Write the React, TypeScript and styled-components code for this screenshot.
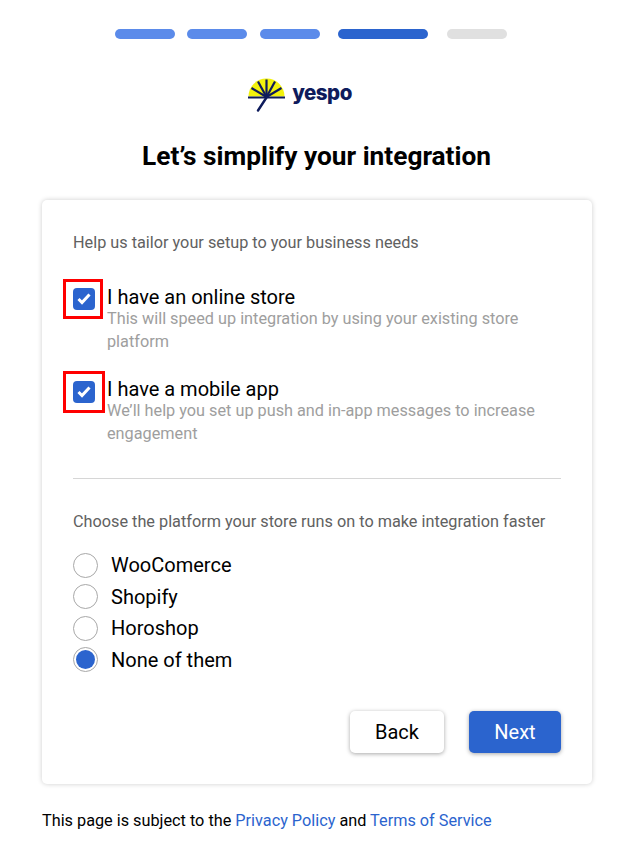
import React from "react";
import styled, { createGlobalStyle } from "styled-components";

const Color = {
  BLUE: "#2b64ce",
  LIGHT_BLUE: "#5b8bea",
  NAVY: "#0e1b5c",
  YELLOW: "#f2f20d",
};

const GlobalStyle = createGlobalStyle`
  html, body {
    margin: 0;
    padding: 0;
    background: #fff;
    font-family: Roboto, "Liberation Sans", sans-serif;
    color: #000;
  }
`;

const Page = styled.div`
  width: 634px;
  height: 846px;
  box-sizing: border-box;
  padding: 29px 42px 0;
  display: flex;
  flex-direction: column;
  overflow: hidden;
`;

const Progress = styled.div`
  display: flex;
  justify-content: center;
  height: 10px;
  margin-left: -12px;
`;

const Step = styled.div<{ $w: number; $bg: string; $after: number }>`
  width: ${(p) => p.$w}px;
  height: 10px;
  border-radius: 5px;
  background: ${(p) => p.$bg};
  margin-right: ${(p) => p.$after}px;
`;

const Logo = styled.div`
  margin-top: 39px;
  height: 34px;
  display: flex;
  align-items: flex-start;
  justify-content: center;
  gap: 7px;
  margin-left: -34px;
`;

const LogoText = styled.span`
  font-family: Inter, sans-serif;
  font-weight: 800;
  font-size: 20.5px;
  line-height: 24px;
  letter-spacing: -0.5px;
  color: ${Color.NAVY};
  margin-top: 3px;
`;

const Title = styled.h1`
  margin: 28px 0 0 -1px;
  font-size: 26.25px;
  line-height: 32px;
  font-weight: 700;
  text-align: center;
`;

const Card = styled.div`
  margin-top: 28px;
  width: 550px;
  height: 584px;
  box-sizing: border-box;
  padding: 31px 31px 0;
  background: #fff;
  border-radius: 5px;
  box-shadow: 0 0 5px rgba(0, 0, 0, 0.2);
  display: flex;
  flex-direction: column;
`;

const Hint = styled.p`
  margin: 0;
  font-size: 16.25px;
  line-height: 23px;
  color: #616161;
`;

const CheckList = styled.div`
  margin-top: 32px;
  display: flex;
  flex-direction: column;
  gap: 25px;
`;

const CheckRow = styled.div`
  display: flex;
  align-items: flex-start;
  gap: 12px;
`;

const CheckBox = styled.div<{ $top: number }>`
  position: relative;
  flex: none;
  width: 22px;
  height: 22px;
  margin-top: ${(p) => p.$top}px;
  border-radius: 4px;
  background: ${Color.BLUE};
  display: flex;
  align-items: center;
  justify-content: center;
`;

const Highlight = styled.div<{ $size: number; $top: number }>`
  position: absolute;
  left: -10px;
  top: ${(p) => p.$top}px;
  width: ${(p) => p.$size}px;
  height: ${(p) => p.$size}px;
  box-sizing: border-box;
  border: 3px solid #f00;
`;

const OptionText = styled.div`
  display: flex;
  flex-direction: column;
`;

const OptionTitle = styled.div`
  font-size: 20px;
  line-height: 22px;
`;

const OptionNote = styled.div`
  font-size: 16.25px;
  line-height: 22.5px;
  color: #9e9e9e;
`;

const Divider = styled.hr`
  margin: 33px 0 0;
  border: none;
  border-top: 1px solid #d6d6d6;
`;

const PlatformHint = styled(Hint)`
  margin-top: 31px;
`;

const RadioList = styled.div`
  margin-top: 20px;
  display: flex;
  flex-direction: column;
  gap: 7.6px;
`;

const RadioRow = styled.div`
  display: flex;
  align-items: center;
  gap: 13px;
  height: 24px;
`;

const Radio = styled.div<{ $on?: boolean }>`
  flex: none;
  width: 25px;
  height: 25px;
  box-sizing: border-box;
  border-radius: 50%;
  border: 1px solid #a8a8a8;
  display: flex;
  align-items: center;
  justify-content: center;

  &::after {
    content: "";
    display: ${(p) => (p.$on ? "block" : "none")};
    width: 19px;
    height: 19px;
    border-radius: 50%;
    background: ${Color.BLUE};
  }
`;

const RadioLabel = styled.span`
  font-size: 20px;
  line-height: 24px;
`;

const Actions = styled.div`
  margin-top: 39px;
  display: flex;
  justify-content: flex-end;
  gap: 25px;
`;

const Button = styled.button<{ $primary?: boolean }>`
  height: 42px;
  width: ${(p) => (p.$primary ? 92 : 94)}px;
  padding: 0;
  border: none;
  border-radius: 5px;
  font-family: inherit;
  font-size: 20px;
  background: ${(p) => (p.$primary ? Color.BLUE : "#fff")};
  color: ${(p) => (p.$primary ? "#fff" : "#000")};
  box-shadow: 0 1px 4px rgba(0, 0, 0, 0.35);
`;

const Footer = styled.p`
  margin: 27px 0 0;
  font-size: 16.25px;
  line-height: 20px;
`;

const FooterLink = styled.a`
  color: ${Color.BLUE};
  text-decoration: none;
`;

const YespoMark = () => (
  <svg width="37" height="34" viewBox="0 0 37 34">
    <path d="M0.5 18.5 A18 18 0 0 1 36.5 18.5 Z" fill={Color.YELLOW} />
    <g stroke={Color.NAVY} strokeWidth="2.2" fill="none">
      <path d="M0 19.5 H37" />
      <path d="M18.5 19 V1.5" />
      <path d="M18.5 19 L10 3.5" />
      <path d="M18.5 19 L27 3.5" />
      <path d="M18.5 19 L3.5 10" />
      <path d="M18.5 19 L33.5 10" />
      <path d="M18.5 19.5 L10 32.5" strokeWidth="2.4" strokeLinecap="round" />
    </g>
  </svg>
);

const CheckMark = () => (
  <svg width="14" height="12" viewBox="0 0 14 12">
    <path d="M1.5 6 L5 9.5 L12.5 1.5" stroke="#fff" strokeWidth="3" fill="none" />
  </svg>
);

const steps = [
  { w: 60, bg: Color.LIGHT_BLUE, after: 12 },
  { w: 60, bg: Color.LIGHT_BLUE, after: 13 },
  { w: 60, bg: Color.LIGHT_BLUE, after: 18 },
  { w: 90, bg: Color.BLUE, after: 19 },
  { w: 60, bg: "#e0e0e0", after: 0 },
];

const options = [
  {
    title: "I have an online store",
    note: "This will speed up integration by using your existing store platform",
    top: 2,
    boxSize: 40,
    boxTop: -9,
  },
  {
    title: "I have a mobile app",
    note: "We’ll help you set up push and in-app messages to increase engagement",
    top: 3,
    boxSize: 42,
    boxTop: -10,
  },
];

const platforms = ["WooComerce", "Shopify", "Horoshop", "None of them"];

const App: React.FC = () => {
  return (
    <Page>
      <GlobalStyle />
      <Progress>
        {steps.map((s, i) => (
          <Step key={i} $w={s.w} $bg={s.bg} $after={s.after} />
        ))}
      </Progress>
      <Logo>
        <YespoMark />
        <LogoText>yespo</LogoText>
      </Logo>
      <Title>Let’s simplify your integration</Title>
      <Card>
        <Hint>Help us tailor your setup to your business needs</Hint>
        <CheckList>
          {options.map((o) => (
            <CheckRow key={o.title}>
              <CheckBox $top={o.top}>
                <CheckMark />
                <Highlight $size={o.boxSize} $top={o.boxTop} />
              </CheckBox>
              <OptionText>
                <OptionTitle>{o.title}</OptionTitle>
                <OptionNote>{o.note}</OptionNote>
              </OptionText>
            </CheckRow>
          ))}
        </CheckList>
        <Divider />
        <PlatformHint>Choose the platform your store runs on to make integration faster</PlatformHint>
        <RadioList>
          {platforms.map((p, i) => (
            <RadioRow key={p}>
              <Radio $on={i === 3} />
              <RadioLabel>{p}</RadioLabel>
            </RadioRow>
          ))}
        </RadioList>
        <Actions>
          <Button>Back</Button>
          <Button $primary>Next</Button>
        </Actions>
      </Card>
      <Footer>
        This page is subject to the <FooterLink href="#">Privacy Policy</FooterLink> and{" "}
        <FooterLink href="#">Terms of Service</FooterLink>
      </Footer>
    </Page>
  );
};

export default App;
